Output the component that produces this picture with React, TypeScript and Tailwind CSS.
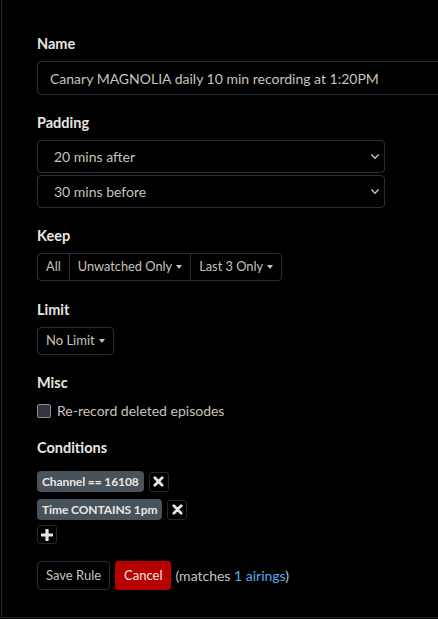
import React from 'react';

function Chevron() {
  return (
    <svg viewBox="0 0 8 5" className="w-[8px] h-[5px]" fill="none" stroke="#c8c3bc" strokeWidth="1.3" strokeLinecap="round" strokeLinejoin="round">
      <path d="M0.7 0.7L4 4.2 7.3 0.7" />
    </svg>
  );
}

function Caret() {
  return <span className="inline-block ml-[4px] w-0 h-0 border-l-[3px] border-r-[3px] border-t-[4px] border-l-transparent border-r-transparent border-t-[#c8c3bc]" />;
}

function XIcon() {
  return (
    <svg viewBox="0 0 12 12" className="w-[11px] h-[11px]">
      <path d="M2 2l8 8M10 2l-8 8" stroke="#eae6df" strokeWidth="3" strokeLinecap="round" />
    </svg>
  );
}

function PlusIcon() {
  return (
    <svg viewBox="0 0 12 12" className="w-[12px] h-[12px]">
      <path d="M6 1v10M1 6h10" stroke="#eae6df" strokeWidth="3.2" strokeLinecap="round" />
    </svg>
  );
}

function Label({ children }: { children: React.ReactNode }) {
  return <div className="text-[14.5px] leading-[21px] font-bold text-[#e8e6e3]">{children}</div>;
}

function Select({ value }: { value: string }) {
  return (
    <div className="w-[348px] h-[33px] flex items-center justify-between pl-[16px] pr-[5px] border border-[#2b2f33] rounded-[4px] text-[14px] text-[#c8c3bc]">
      <span>{value}</span>
      <Chevron />
    </div>
  );
}

function Condition({ text }: { text: string }) {
  return (
    <div className="flex items-center gap-[5px]">
      <span className="h-[21px] flex items-center px-[5px] rounded-[4px] bg-[#48525a] text-[12px] tracking-[-0.1px] font-bold text-[#e8e6e3]">{text}</span>
      <button className="w-[20px] h-[20px] flex items-center justify-center border border-[#25282b] rounded-[3px]">
        <XIcon />
      </button>
    </div>
  );
}

export default function App() {
  return (
    <div className="bg-black w-[438px] h-[619px] overflow-hidden" style={{ fontFamily: 'Lato, "Noto Sans", sans-serif' }}>
      <div className="ml-[1px] h-[618px] border-l border-b border-[#26292c] pl-[35px] pt-[33px]">
        <Label>Name</Label>
        <div className="mt-[7px] w-[420px] h-[34px] flex items-center pl-[12px] border border-[#2b2f33] rounded-[4px] text-[14px] text-[#c8c3bc] whitespace-nowrap">
          Canary MAGNOLIA daily 10 min recording at 1:20PM
        </div>

        <div className="mt-[17px]"><Label>Padding</Label></div>
        <div className="mt-[7px] flex flex-col gap-[2px]">
          <Select value="20 mins after" />
          <Select value="30 mins before" />
        </div>

        <div className="mt-[17px]"><Label>Keep</Label></div>
        <div className="mt-[7px] flex w-fit h-[28px] border border-[#2b2f33] rounded-[4px] text-[12.8px] text-[#c8c3bc]">
          <div className="flex items-center px-[8px]">All</div>
          <div className="flex items-center px-[8px] border-l border-[#2b2f33]">Unwatched Only<Caret /></div>
          <div className="flex items-center px-[8px] border-l border-[#2b2f33]">Last 3 Only<Caret /></div>
        </div>

        <div className="mt-[18px]"><Label>Limit</Label></div>
        <div className="mt-[7px] flex w-fit h-[28px] items-center px-[8px] border border-[#2b2f33] rounded-[4px] text-[13px] text-[#c8c3bc]">
          No Limit<Caret />
        </div>

        <div className="mt-[17px]"><Label>Misc</Label></div>
        <div className="mt-[7px] flex items-center gap-[6px] h-[21px] text-[14px] text-[#c8c3bc]">
          <span className="w-[14px] h-[14px] rounded-[2px] bg-[#33343f] border border-[#8b8b99]" />
          Re-record deleted episodes
        </div>

        <div className="mt-[16px]"><Label>Conditions</Label></div>
        <div className="mt-[13px] flex flex-col gap-[7px] items-start">
          <Condition text="Channel == 16108" />
          <Condition text="Time CONTAINS 1pm" />
        </div>
        <button className="mt-[5px] w-[20px] h-[19px] flex items-center justify-center border border-[#25282b] rounded-[3px]">
          <PlusIcon />
        </button>

        <div className="mt-[17px] flex items-center text-[13px]">
          <button className="h-[29px] px-[8px] border border-[#2b2f33] rounded-[4px] text-[#c8c3bc]">Save Rule</button>
          <button className="ml-[5px] h-[29px] px-[9px] rounded-[3px] bg-[#b70000] text-[#f0ece6]">Cancel</button>
          <span className="ml-[4px] text-[14px] text-[#c8c3bc]">(matches <span className="text-[#5aa9ee]">1 airings</span>)</span>
        </div>
      </div>
    </div>
  );
}
